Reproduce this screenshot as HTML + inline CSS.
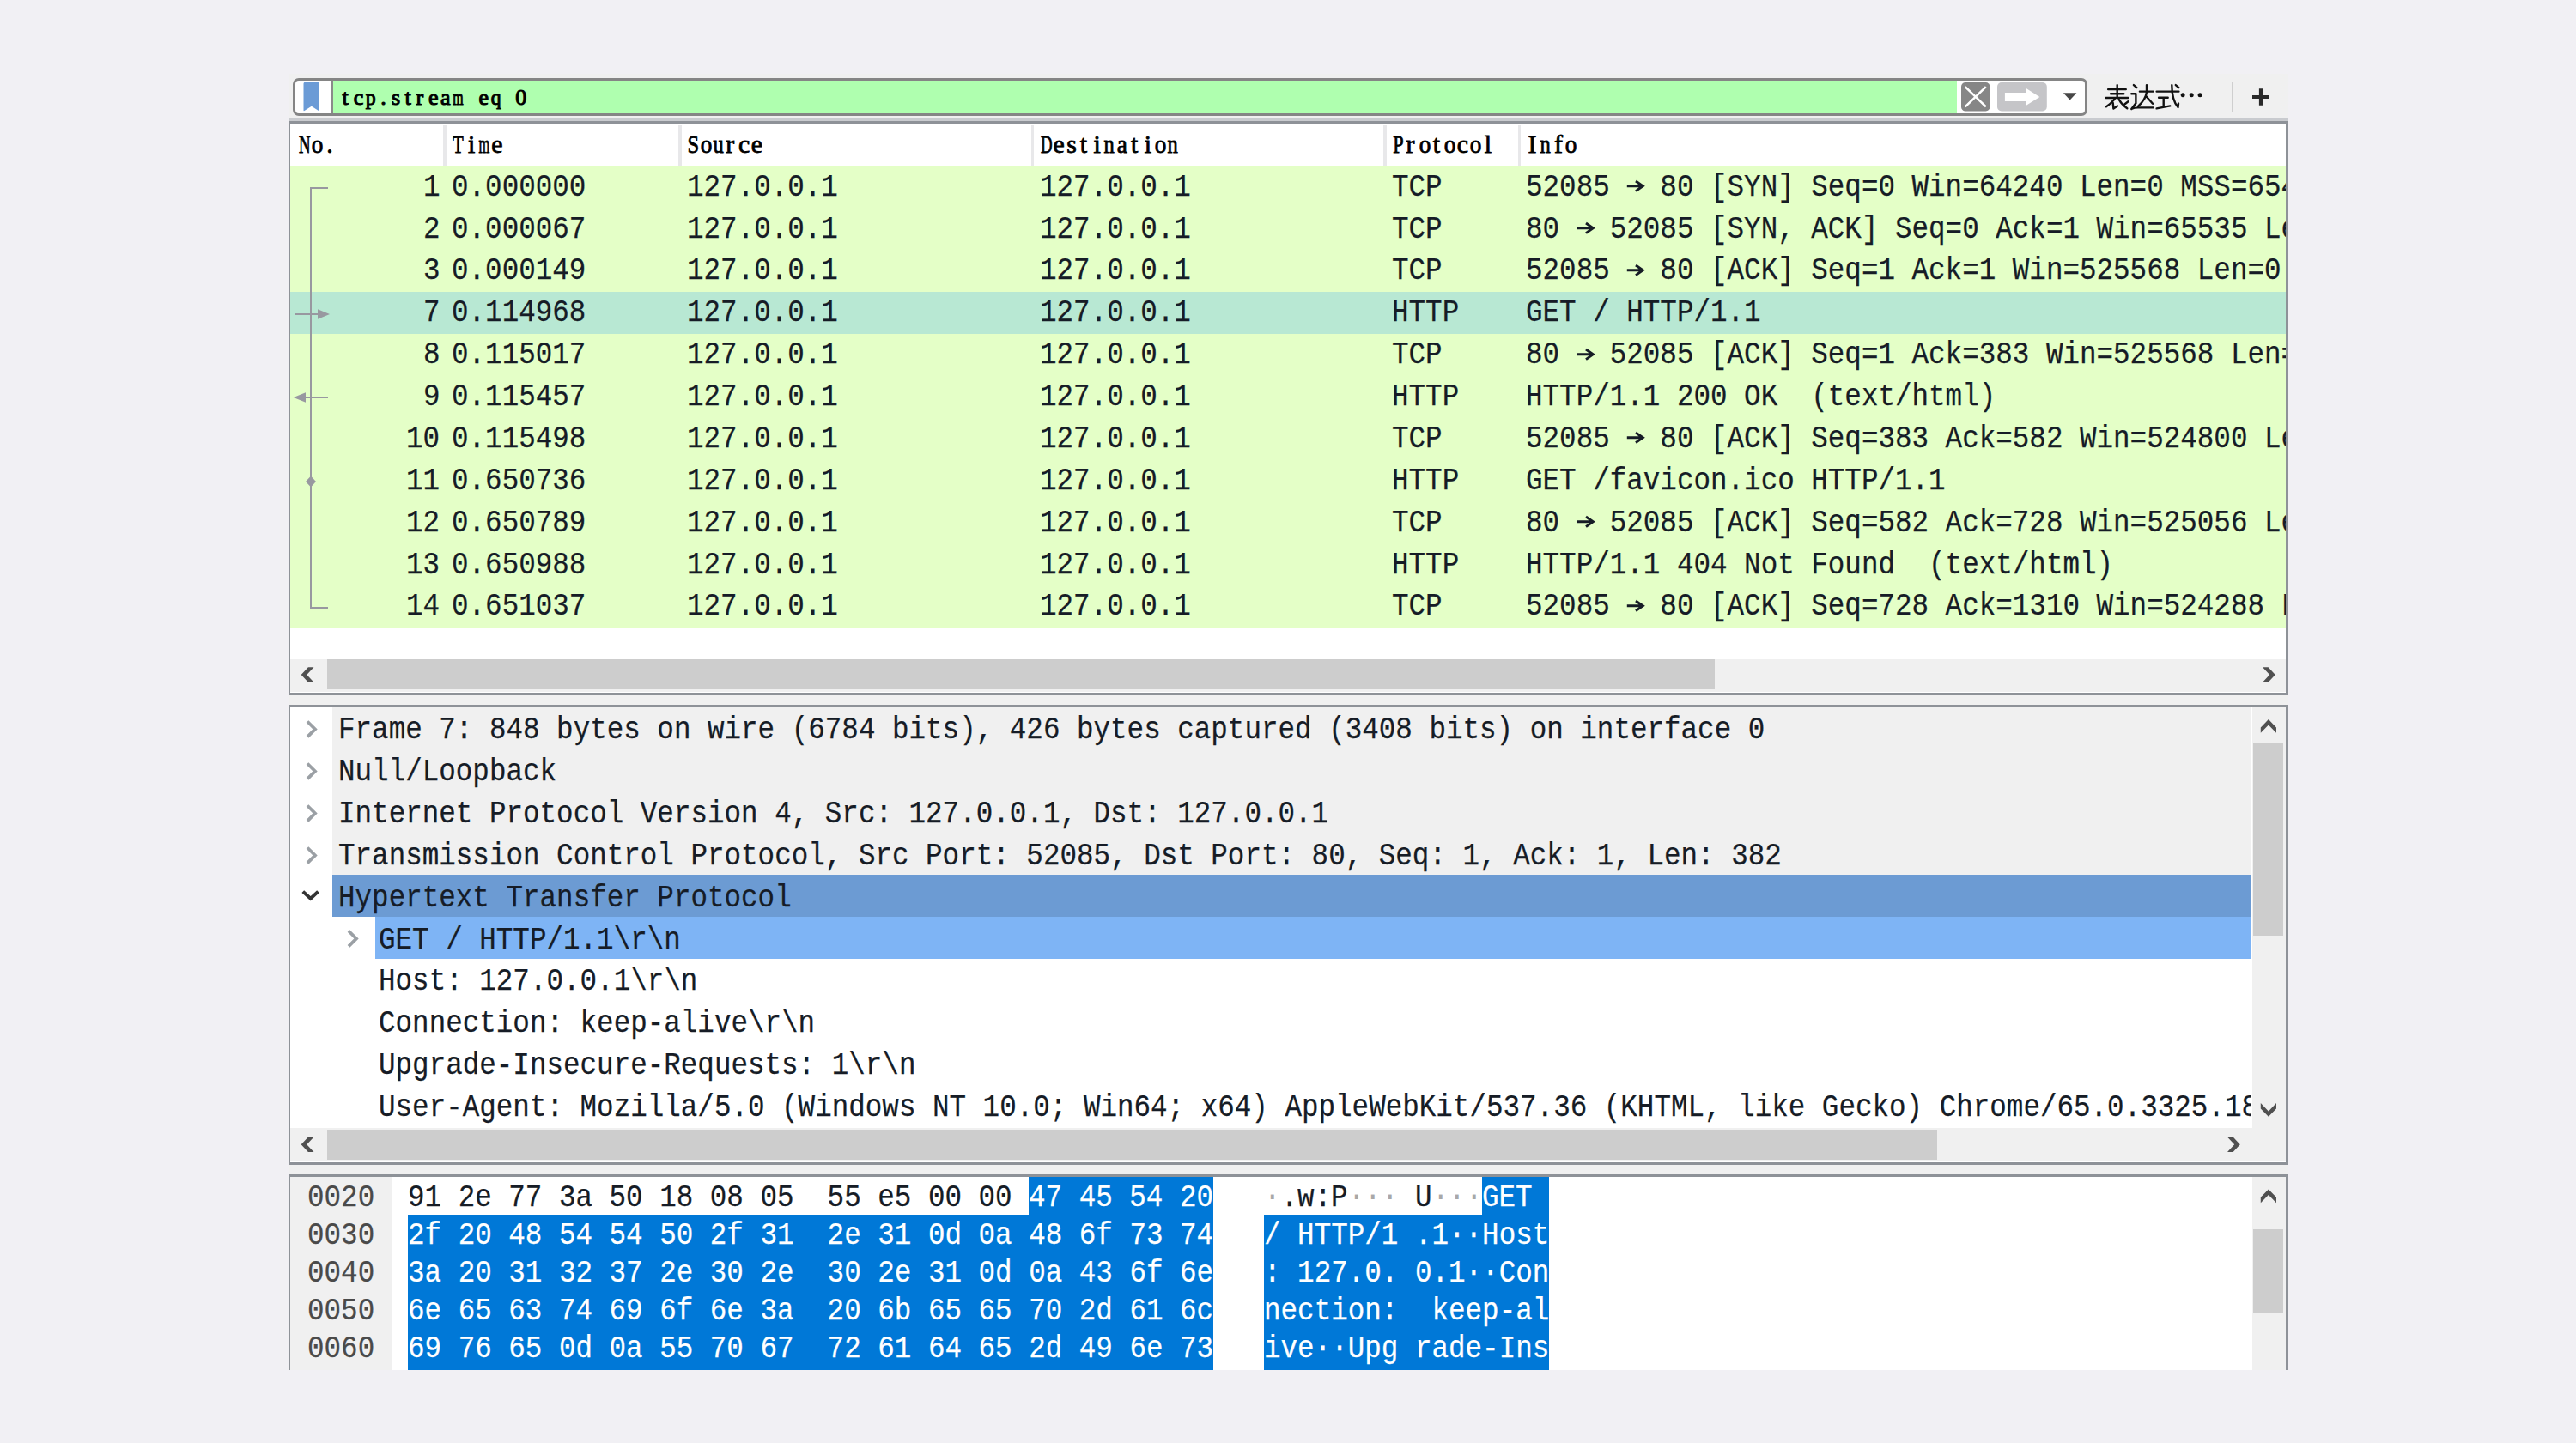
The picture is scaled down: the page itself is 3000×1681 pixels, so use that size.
<!DOCTYPE html>
<html><head><meta charset="utf-8"><style>
html,body{margin:0;padding:0;}
body{width:3000px;height:1681px;overflow:hidden;background:#f1f0f4;position:relative;font-family:"Liberation Mono",monospace;}
body div{position:absolute;}
.t{white-space:pre;}
</style></head><body>
<div style="left:336.00px;top:86.00px;width:2329.00px;height:1510.00px;background:#f0f0f0;"></div>
<div style="left:340.5px;top:90.5px;width:2090px;height:44px;box-sizing:border-box;border:3px solid #858585;border-radius:7px;background:#fff"></div>
<div style="left:387.50px;top:93.50px;width:1891.10px;height:38.00px;background:#afffaf;"></div>
<div style="left:385.00px;top:93.50px;width:2.80px;height:38.00px;background:#8a8a8a;"></div>
<svg style="position:absolute;left:352px;top:95px" width="22" height="36" viewBox="0 0 22 36"><path d="M1.5 2.5 Q1.5 0.8 3.2 0.8 L18.2 0.8 Q20 0.8 20 2.5 L20 33.5 Q20 34.5 19 34 L10.8 28.8 L2.5 34 Q1.5 34.5 1.5 33.5 Z" fill="#6b9bd6"/></svg>
<div class="t" style="left:398.56px;top:87.83px;line-height:52.00px;font-size:26.0px;font-family:'Liberation Serif';font-weight:normal;color:#000;transform:scale(1.000,1.0);transform-origin:4.33px 34.77px;-webkit-text-stroke:1.1px #000">t</div>
<div class="t" style="left:411.68px;top:87.83px;line-height:52.00px;font-size:26.0px;font-family:'Liberation Serif';font-weight:normal;color:#000;transform:scale(1.000,1.0);transform-origin:5.77px 34.77px;-webkit-text-stroke:1.1px #000">c</div>
<div class="t" style="left:424.80px;top:87.83px;line-height:52.00px;font-size:26.0px;font-family:'Liberation Serif';font-weight:normal;color:#000;transform:scale(0.913,1.0);transform-origin:7.23px 34.77px;-webkit-text-stroke:1.1px #000">p</div>
<div class="t" style="left:443.35px;top:87.83px;line-height:52.00px;font-size:26.0px;font-family:'Liberation Serif';font-weight:normal;color:#000;transform:scale(1.000,1.0);transform-origin:3.25px 34.77px;-webkit-text-stroke:1.1px #000">.</div>
<div class="t" style="left:456.11px;top:87.83px;line-height:52.00px;font-size:26.0px;font-family:'Liberation Serif';font-weight:normal;color:#000;transform:scale(1.000,1.0);transform-origin:5.06px 34.77px;-webkit-text-stroke:1.1px #000">s</div>
<div class="t" style="left:471.41px;top:87.83px;line-height:52.00px;font-size:26.0px;font-family:'Liberation Serif';font-weight:normal;color:#000;transform:scale(1.000,1.0);transform-origin:4.33px 34.77px;-webkit-text-stroke:1.1px #000">t</div>
<div class="t" style="left:484.53px;top:87.83px;line-height:52.00px;font-size:26.0px;font-family:'Liberation Serif';font-weight:normal;color:#000;transform:scale(1.000,1.0);transform-origin:5.77px 34.77px;-webkit-text-stroke:1.1px #000">r</div>
<div class="t" style="left:499.10px;top:87.83px;line-height:52.00px;font-size:26.0px;font-family:'Liberation Serif';font-weight:normal;color:#000;transform:scale(1.000,1.0);transform-origin:5.77px 34.77px;-webkit-text-stroke:1.1px #000">e</div>
<div class="t" style="left:512.95px;top:87.83px;line-height:52.00px;font-size:26.0px;font-family:'Liberation Serif';font-weight:normal;color:#000;transform:scale(1.000,1.0);transform-origin:6.50px 34.77px;-webkit-text-stroke:1.1px #000">a</div>
<div class="t" style="left:523.19px;top:87.83px;line-height:52.00px;font-size:26.0px;font-family:'Liberation Serif';font-weight:normal;color:#000;transform:scale(0.609,1.0);transform-origin:10.83px 34.77px;-webkit-text-stroke:1.1px #000">m</div>
<div class="t" style="left:557.38px;top:87.83px;line-height:52.00px;font-size:26.0px;font-family:'Liberation Serif';font-weight:normal;color:#000;transform:scale(1.000,1.0);transform-origin:5.77px 34.77px;-webkit-text-stroke:1.1px #000">e</div>
<div class="t" style="left:570.50px;top:87.83px;line-height:52.00px;font-size:26.0px;font-family:'Liberation Serif';font-weight:normal;color:#000;transform:scale(0.913,1.0);transform-origin:7.23px 34.77px;-webkit-text-stroke:1.1px #000">q</div>
<div class="t" style="left:600.37px;top:87.83px;line-height:52.00px;font-size:26.0px;font-family:'Liberation Serif';font-weight:normal;color:#000;transform:scale(1.000,1.0);transform-origin:6.50px 34.77px;-webkit-text-stroke:1.1px #000">0</div>
<svg style="position:absolute;left:2284px;top:95.9px" width="34" height="34" viewBox="0 0 34 34"><rect x="0" y="0" width="33.5" height="33.4" rx="5" fill="#868686"/><path d="M4.7 5.1 L28.8 28.4 M28.8 5.1 L4.7 28.4" stroke="#fff" stroke-width="2.6"/></svg>
<svg style="position:absolute;left:2325.6px;top:95.9px" width="58" height="34" viewBox="0 0 58 34"><rect x="0" y="0" width="57.8" height="33.4" rx="5" fill="#c5c5c8"/><path d="M8.9 12.1 L33.8 12.1 L33.8 7.1 L49.4 16.9 L33.8 26.8 L33.8 22.1 L8.9 22.1 Z" fill="#fff"/></svg>
<svg style="position:absolute;left:2400px;top:105px" width="22" height="14" viewBox="0 0 22 14"><path d="M2.9 3.3 L18.4 3.3 L10.65 11.5 Z" fill="#474747"/></svg>
<svg style="position:absolute;left:2445px;top:92px" width="130" height="40" viewBox="0 0 130 40"><g stroke="#111" stroke-width="2.4" fill="none" stroke-linecap="round" stroke-linejoin="round">
<path d="M10.1 12.1 H30.8 M13.1 17.2 H28.3 M7.6 22 H33.3 M20.7 7.1 V22 M17.7 23.5 Q13 29 8 32.3 M15.7 28 L16.4 34.5 L21 31.5 M22.7 24 Q26 30 32.3 34.3 M33.5 26.2 L28.3 30.3"/>
<path d="M39.9 7.1 L43.4 10.1 M37.3 17.2 H42.4 V28.3 L37.3 35 M37.3 34.8 Q41 33.2 46 33.4 H62.6 M46.9 14.6 H62.6 M55 7.1 V15.1 Q54 24 44.9 31.8 M53.8 19.5 L62 28.8"/>
<path d="M66.6 14.6 H92.4 M69.1 21.7 H79.7 M74.7 21.7 V31.8 M66.6 34.4 L82.3 31.4 M84.3 7.1 Q84.3 25 91.5 33 L92 28.5 M88.8 7.1 L92.4 10.1"/>
</g><circle cx="97.1" cy="18.7" r="2.5" fill="#111"/><circle cx="107.2" cy="18.7" r="2.5" fill="#111"/><circle cx="117.1" cy="18.7" r="2.5" fill="#111"/></svg>
<div style="left:2598.80px;top:96.00px;width:1.60px;height:33.50px;background:#cfcfcf;"></div>
<svg style="position:absolute;left:2620px;top:100px" width="26" height="26" viewBox="0 0 26 26"><path d="M13 3.3 V22.7 M3 13 H23" stroke="#2a2a2a" stroke-width="4.2"/></svg>
<div style="left:336.00px;top:138.00px;width:2329.00px;height:3.00px;background:#c9cbcf;"></div>
<div style="left:336px;top:140.5px;width:2329px;height:669px;box-sizing:border-box;border-style:solid;border-color:#8e9298;border-width:4.3px 3px 3px 2px;background:#fff"></div>
<div style="left:516.20px;top:146.00px;width:3.40px;height:47.00px;background:#e8e8ea;"></div>
<div style="left:790.20px;top:146.00px;width:3.40px;height:47.00px;background:#e8e8ea;"></div>
<div style="left:1200.70px;top:146.00px;width:3.40px;height:47.00px;background:#e8e8ea;"></div>
<div style="left:1611.40px;top:146.00px;width:3.40px;height:47.00px;background:#e8e8ea;"></div>
<div style="left:1767.50px;top:146.00px;width:3.40px;height:47.00px;background:#e8e8ea;"></div>
<div class="t" style="left:343.64px;top:137.75px;line-height:59.60px;font-size:29.8px;font-family:'Liberation Serif';font-weight:normal;color:#000;transform:scale(0.632,1.0);transform-origin:10.76px 39.85px;-webkit-text-stroke:0.85px #000">N</div>
<div class="t" style="left:361.75px;top:137.75px;line-height:59.60px;font-size:29.8px;font-family:'Liberation Serif';font-weight:normal;color:#000;transform:scale(0.913,1.0);transform-origin:7.45px 39.85px;-webkit-text-stroke:0.85px #000">o</div>
<div class="t" style="left:380.27px;top:137.75px;line-height:59.60px;font-size:29.8px;font-family:'Liberation Serif';font-weight:normal;color:#000;transform:scale(1.000,1.0);transform-origin:3.73px 39.85px;-webkit-text-stroke:0.85px #000">.</div>
<div class="t" style="left:524.46px;top:137.75px;line-height:59.60px;font-size:29.8px;font-family:'Liberation Serif';font-weight:normal;color:#000;transform:scale(0.684,1.0);transform-origin:9.94px 39.85px;-webkit-text-stroke:0.85px #000">T</div>
<div class="t" style="left:545.06px;top:137.75px;line-height:59.60px;font-size:29.8px;font-family:'Liberation Serif';font-weight:normal;color:#000;transform:scale(1.000,1.0);transform-origin:4.14px 39.85px;-webkit-text-stroke:0.85px #000">i</div>
<div class="t" style="left:551.59px;top:137.75px;line-height:59.60px;font-size:29.8px;font-family:'Liberation Serif';font-weight:normal;color:#000;transform:scale(0.548,1.0);transform-origin:12.41px 39.85px;-webkit-text-stroke:0.85px #000">m</div>
<div class="t" style="left:572.19px;top:137.75px;line-height:59.60px;font-size:29.8px;font-family:'Liberation Serif';font-weight:normal;color:#000;transform:scale(1.000,1.0);transform-origin:6.61px 39.85px;-webkit-text-stroke:0.85px #000">e</div>
<div class="t" style="left:799.11px;top:137.75px;line-height:59.60px;font-size:29.8px;font-family:'Liberation Serif';font-weight:normal;color:#000;transform:scale(0.821,1.0);transform-origin:8.29px 39.85px;-webkit-text-stroke:0.85px #000">S</div>
<div class="t" style="left:814.75px;top:137.75px;line-height:59.60px;font-size:29.8px;font-family:'Liberation Serif';font-weight:normal;color:#000;transform:scale(0.913,1.0);transform-origin:7.45px 39.85px;-webkit-text-stroke:0.85px #000">o</div>
<div class="t" style="left:828.71px;top:137.75px;line-height:59.60px;font-size:29.8px;font-family:'Liberation Serif';font-weight:normal;color:#000;transform:scale(0.821,1.0);transform-origin:8.29px 39.85px;-webkit-text-stroke:0.85px #000">u</div>
<div class="t" style="left:845.19px;top:137.75px;line-height:59.60px;font-size:29.8px;font-family:'Liberation Serif';font-weight:normal;color:#000;transform:scale(1.000,1.0);transform-origin:6.61px 39.85px;-webkit-text-stroke:0.85px #000">r</div>
<div class="t" style="left:859.99px;top:137.75px;line-height:59.60px;font-size:29.8px;font-family:'Liberation Serif';font-weight:normal;color:#000;transform:scale(1.000,1.0);transform-origin:6.61px 39.85px;-webkit-text-stroke:0.85px #000">c</div>
<div class="t" style="left:874.79px;top:137.75px;line-height:59.60px;font-size:29.8px;font-family:'Liberation Serif';font-weight:normal;color:#000;transform:scale(1.000,1.0);transform-origin:6.61px 39.85px;-webkit-text-stroke:0.85px #000">e</div>
<div class="t" style="left:1207.64px;top:137.75px;line-height:59.60px;font-size:29.8px;font-family:'Liberation Serif';font-weight:normal;color:#000;transform:scale(0.632,1.0);transform-origin:10.76px 39.85px;-webkit-text-stroke:0.85px #000">D</div>
<div class="t" style="left:1226.59px;top:137.75px;line-height:59.60px;font-size:29.8px;font-family:'Liberation Serif';font-weight:normal;color:#000;transform:scale(1.000,1.0);transform-origin:6.61px 39.85px;-webkit-text-stroke:0.85px #000">e</div>
<div class="t" style="left:1242.20px;top:137.75px;line-height:59.60px;font-size:29.8px;font-family:'Liberation Serif';font-weight:normal;color:#000;transform:scale(1.000,1.0);transform-origin:5.80px 39.85px;-webkit-text-stroke:0.85px #000">s</div>
<div class="t" style="left:1257.84px;top:137.75px;line-height:59.60px;font-size:29.8px;font-family:'Liberation Serif';font-weight:normal;color:#000;transform:scale(1.000,1.0);transform-origin:4.96px 39.85px;-webkit-text-stroke:0.85px #000">t</div>
<div class="t" style="left:1273.46px;top:137.75px;line-height:59.60px;font-size:29.8px;font-family:'Liberation Serif';font-weight:normal;color:#000;transform:scale(1.000,1.0);transform-origin:4.14px 39.85px;-webkit-text-stroke:0.85px #000">i</div>
<div class="t" style="left:1284.11px;top:137.75px;line-height:59.60px;font-size:29.8px;font-family:'Liberation Serif';font-weight:normal;color:#000;transform:scale(0.821,1.0);transform-origin:8.29px 39.85px;-webkit-text-stroke:0.85px #000">n</div>
<div class="t" style="left:1299.75px;top:137.75px;line-height:59.60px;font-size:29.8px;font-family:'Liberation Serif';font-weight:normal;color:#000;transform:scale(0.913,1.0);transform-origin:7.45px 39.85px;-webkit-text-stroke:0.85px #000">a</div>
<div class="t" style="left:1317.04px;top:137.75px;line-height:59.60px;font-size:29.8px;font-family:'Liberation Serif';font-weight:normal;color:#000;transform:scale(1.000,1.0);transform-origin:4.96px 39.85px;-webkit-text-stroke:0.85px #000">t</div>
<div class="t" style="left:1332.66px;top:137.75px;line-height:59.60px;font-size:29.8px;font-family:'Liberation Serif';font-weight:normal;color:#000;transform:scale(1.000,1.0);transform-origin:4.14px 39.85px;-webkit-text-stroke:0.85px #000">i</div>
<div class="t" style="left:1344.15px;top:137.75px;line-height:59.60px;font-size:29.8px;font-family:'Liberation Serif';font-weight:normal;color:#000;transform:scale(0.913,1.0);transform-origin:7.45px 39.85px;-webkit-text-stroke:0.85px #000">o</div>
<div class="t" style="left:1358.11px;top:137.75px;line-height:59.60px;font-size:29.8px;font-family:'Liberation Serif';font-weight:normal;color:#000;transform:scale(0.821,1.0);transform-origin:8.29px 39.85px;-webkit-text-stroke:0.85px #000">n</div>
<div class="t" style="left:1620.30px;top:137.75px;line-height:59.60px;font-size:29.8px;font-family:'Liberation Serif';font-weight:normal;color:#000;transform:scale(0.747,1.0);transform-origin:9.10px 39.85px;-webkit-text-stroke:0.85px #000">P</div>
<div class="t" style="left:1637.59px;top:137.75px;line-height:59.60px;font-size:29.8px;font-family:'Liberation Serif';font-weight:normal;color:#000;transform:scale(1.000,1.0);transform-origin:6.61px 39.85px;-webkit-text-stroke:0.85px #000">r</div>
<div class="t" style="left:1651.55px;top:137.75px;line-height:59.60px;font-size:29.8px;font-family:'Liberation Serif';font-weight:normal;color:#000;transform:scale(0.913,1.0);transform-origin:7.45px 39.85px;-webkit-text-stroke:0.85px #000">o</div>
<div class="t" style="left:1668.84px;top:137.75px;line-height:59.60px;font-size:29.8px;font-family:'Liberation Serif';font-weight:normal;color:#000;transform:scale(1.000,1.0);transform-origin:4.96px 39.85px;-webkit-text-stroke:0.85px #000">t</div>
<div class="t" style="left:1681.15px;top:137.75px;line-height:59.60px;font-size:29.8px;font-family:'Liberation Serif';font-weight:normal;color:#000;transform:scale(0.913,1.0);transform-origin:7.45px 39.85px;-webkit-text-stroke:0.85px #000">o</div>
<div class="t" style="left:1696.79px;top:137.75px;line-height:59.60px;font-size:29.8px;font-family:'Liberation Serif';font-weight:normal;color:#000;transform:scale(1.000,1.0);transform-origin:6.61px 39.85px;-webkit-text-stroke:0.85px #000">c</div>
<div class="t" style="left:1710.75px;top:137.75px;line-height:59.60px;font-size:29.8px;font-family:'Liberation Serif';font-weight:normal;color:#000;transform:scale(0.913,1.0);transform-origin:7.45px 39.85px;-webkit-text-stroke:0.85px #000">o</div>
<div class="t" style="left:1728.86px;top:137.75px;line-height:59.60px;font-size:29.8px;font-family:'Liberation Serif';font-weight:normal;color:#000;transform:scale(1.000,1.0);transform-origin:4.14px 39.85px;-webkit-text-stroke:0.85px #000">l</div>
<div class="t" style="left:1779.60px;top:137.75px;line-height:59.60px;font-size:29.8px;font-family:'Liberation Serif';font-weight:normal;color:#000;transform:scale(1.000,1.0);transform-origin:5.80px 39.85px;-webkit-text-stroke:0.85px #000">I</div>
<div class="t" style="left:1791.91px;top:137.75px;line-height:59.60px;font-size:29.8px;font-family:'Liberation Serif';font-weight:normal;color:#000;transform:scale(0.821,1.0);transform-origin:8.29px 39.85px;-webkit-text-stroke:0.85px #000">n</div>
<div class="t" style="left:1810.04px;top:137.75px;line-height:59.60px;font-size:29.8px;font-family:'Liberation Serif';font-weight:normal;color:#000;transform:scale(1.000,1.0);transform-origin:4.96px 39.85px;-webkit-text-stroke:0.85px #000">f</div>
<div class="t" style="left:1822.35px;top:137.75px;line-height:59.60px;font-size:29.8px;font-family:'Liberation Serif';font-weight:normal;color:#000;transform:scale(0.913,1.0);transform-origin:7.45px 39.85px;-webkit-text-stroke:0.85px #000">o</div>
<div style="left:338.00px;top:193.00px;width:2324.00px;height:49.18px;background:#e4ffc7;"></div>
<div style="left:338.00px;top:241.88px;width:2324.00px;height:49.18px;background:#e4ffc7;"></div>
<div style="left:338.00px;top:290.76px;width:2324.00px;height:49.18px;background:#e4ffc7;"></div>
<div style="left:338.00px;top:339.64px;width:2324.00px;height:49.18px;background:#b8e8d3;"></div>
<div style="left:338.00px;top:388.52px;width:2324.00px;height:49.18px;background:#e4ffc7;"></div>
<div style="left:338.00px;top:437.40px;width:2324.00px;height:49.18px;background:#e4ffc7;"></div>
<div style="left:338.00px;top:486.28px;width:2324.00px;height:49.18px;background:#e4ffc7;"></div>
<div style="left:338.00px;top:535.16px;width:2324.00px;height:49.18px;background:#e4ffc7;"></div>
<div style="left:338.00px;top:584.04px;width:2324.00px;height:49.18px;background:#e4ffc7;"></div>
<div style="left:338.00px;top:632.92px;width:2324.00px;height:49.18px;background:#e4ffc7;"></div>
<div style="left:338.00px;top:681.80px;width:2324.00px;height:49.18px;background:#e4ffc7;"></div>
<div style="left:338px;top:193px;width:2324px;height:574px;overflow:hidden">
<div class="t" style="left:154.95px;top:-10.38px;line-height:72.00px;font-size:36.0px;color:#161c26;font-weight:normal;transform:scale(0.9047,1.0000);transform-origin:0 45.58px;-webkit-text-stroke:0.25px #161c26">1</div>
<div class="t" style="left:187.50px;top:-10.38px;line-height:72.00px;font-size:36.0px;color:#161c26;font-weight:normal;transform:scale(0.9047,1.0000);transform-origin:0 45.58px;-webkit-text-stroke:0.25px #161c26">0.000000</div>
<div class="t" style="left:461.50px;top:-10.38px;line-height:72.00px;font-size:36.0px;color:#161c26;font-weight:normal;transform:scale(0.9047,1.0000);transform-origin:0 45.58px;-webkit-text-stroke:0.25px #161c26">127.0.0.1</div>
<div class="t" style="left:872.50px;top:-10.38px;line-height:72.00px;font-size:36.0px;color:#161c26;font-weight:normal;transform:scale(0.9047,1.0000);transform-origin:0 45.58px;-webkit-text-stroke:0.25px #161c26">127.0.0.1</div>
<div class="t" style="left:1283.00px;top:-10.38px;line-height:72.00px;font-size:36.0px;color:#161c26;font-weight:normal;transform:scale(0.9047,1.0000);transform-origin:0 45.58px;-webkit-text-stroke:0.25px #161c26">TCP</div>
<div class="t" style="left:1439.00px;top:-10.38px;line-height:72.00px;font-size:36.0px;color:#161c26;font-weight:normal;transform:scale(0.9047,1.0000);transform-origin:0 45.58px;-webkit-text-stroke:0.25px #161c26">52085   80 [SYN] Seq=0 Win=64240 Len=0 MSS=65495 WS=256 SACK_PERM=1</div>
<svg style="position:absolute;left:1556.27px;top:0.00px" width="22" height="48" viewBox="0 0 22 48"><path d="M0.8 23.8 H19 M11 18 L19.3 23.8 L11 29.6" stroke="#161c26" stroke-width="2.9" fill="none"/></svg>
<div class="t" style="left:154.95px;top:38.50px;line-height:72.00px;font-size:36.0px;color:#161c26;font-weight:normal;transform:scale(0.9047,1.0000);transform-origin:0 45.58px;-webkit-text-stroke:0.25px #161c26">2</div>
<div class="t" style="left:187.50px;top:38.50px;line-height:72.00px;font-size:36.0px;color:#161c26;font-weight:normal;transform:scale(0.9047,1.0000);transform-origin:0 45.58px;-webkit-text-stroke:0.25px #161c26">0.000067</div>
<div class="t" style="left:461.50px;top:38.50px;line-height:72.00px;font-size:36.0px;color:#161c26;font-weight:normal;transform:scale(0.9047,1.0000);transform-origin:0 45.58px;-webkit-text-stroke:0.25px #161c26">127.0.0.1</div>
<div class="t" style="left:872.50px;top:38.50px;line-height:72.00px;font-size:36.0px;color:#161c26;font-weight:normal;transform:scale(0.9047,1.0000);transform-origin:0 45.58px;-webkit-text-stroke:0.25px #161c26">127.0.0.1</div>
<div class="t" style="left:1283.00px;top:38.50px;line-height:72.00px;font-size:36.0px;color:#161c26;font-weight:normal;transform:scale(0.9047,1.0000);transform-origin:0 45.58px;-webkit-text-stroke:0.25px #161c26">TCP</div>
<div class="t" style="left:1439.00px;top:38.50px;line-height:72.00px;font-size:36.0px;color:#161c26;font-weight:normal;transform:scale(0.9047,1.0000);transform-origin:0 45.58px;-webkit-text-stroke:0.25px #161c26">80   52085 [SYN, ACK] Seq=0 Ack=1 Win=65535 Len=0 MSS=65495 WS=256 SACK_PERM=1</div>
<svg style="position:absolute;left:1497.63px;top:48.88px" width="22" height="48" viewBox="0 0 22 48"><path d="M0.8 23.8 H19 M11 18 L19.3 23.8 L11 29.6" stroke="#161c26" stroke-width="2.9" fill="none"/></svg>
<div class="t" style="left:154.95px;top:87.38px;line-height:72.00px;font-size:36.0px;color:#161c26;font-weight:normal;transform:scale(0.9047,1.0000);transform-origin:0 45.58px;-webkit-text-stroke:0.25px #161c26">3</div>
<div class="t" style="left:187.50px;top:87.38px;line-height:72.00px;font-size:36.0px;color:#161c26;font-weight:normal;transform:scale(0.9047,1.0000);transform-origin:0 45.58px;-webkit-text-stroke:0.25px #161c26">0.000149</div>
<div class="t" style="left:461.50px;top:87.38px;line-height:72.00px;font-size:36.0px;color:#161c26;font-weight:normal;transform:scale(0.9047,1.0000);transform-origin:0 45.58px;-webkit-text-stroke:0.25px #161c26">127.0.0.1</div>
<div class="t" style="left:872.50px;top:87.38px;line-height:72.00px;font-size:36.0px;color:#161c26;font-weight:normal;transform:scale(0.9047,1.0000);transform-origin:0 45.58px;-webkit-text-stroke:0.25px #161c26">127.0.0.1</div>
<div class="t" style="left:1283.00px;top:87.38px;line-height:72.00px;font-size:36.0px;color:#161c26;font-weight:normal;transform:scale(0.9047,1.0000);transform-origin:0 45.58px;-webkit-text-stroke:0.25px #161c26">TCP</div>
<div class="t" style="left:1439.00px;top:87.38px;line-height:72.00px;font-size:36.0px;color:#161c26;font-weight:normal;transform:scale(0.9047,1.0000);transform-origin:0 45.58px;-webkit-text-stroke:0.25px #161c26">52085   80 [ACK] Seq=1 Ack=1 Win=525568 Len=0</div>
<svg style="position:absolute;left:1556.27px;top:97.76px" width="22" height="48" viewBox="0 0 22 48"><path d="M0.8 23.8 H19 M11 18 L19.3 23.8 L11 29.6" stroke="#161c26" stroke-width="2.9" fill="none"/></svg>
<div class="t" style="left:154.95px;top:136.26px;line-height:72.00px;font-size:36.0px;color:#161c26;font-weight:normal;transform:scale(0.9047,1.0000);transform-origin:0 45.58px;-webkit-text-stroke:0.25px #161c26">7</div>
<div class="t" style="left:187.50px;top:136.26px;line-height:72.00px;font-size:36.0px;color:#161c26;font-weight:normal;transform:scale(0.9047,1.0000);transform-origin:0 45.58px;-webkit-text-stroke:0.25px #161c26">0.114968</div>
<div class="t" style="left:461.50px;top:136.26px;line-height:72.00px;font-size:36.0px;color:#161c26;font-weight:normal;transform:scale(0.9047,1.0000);transform-origin:0 45.58px;-webkit-text-stroke:0.25px #161c26">127.0.0.1</div>
<div class="t" style="left:872.50px;top:136.26px;line-height:72.00px;font-size:36.0px;color:#161c26;font-weight:normal;transform:scale(0.9047,1.0000);transform-origin:0 45.58px;-webkit-text-stroke:0.25px #161c26">127.0.0.1</div>
<div class="t" style="left:1283.00px;top:136.26px;line-height:72.00px;font-size:36.0px;color:#161c26;font-weight:normal;transform:scale(0.9047,1.0000);transform-origin:0 45.58px;-webkit-text-stroke:0.25px #161c26">HTTP</div>
<div class="t" style="left:1439.00px;top:136.26px;line-height:72.00px;font-size:36.0px;color:#161c26;font-weight:normal;transform:scale(0.9047,1.0000);transform-origin:0 45.58px;-webkit-text-stroke:0.25px #161c26">GET / HTTP/1.1</div>
<div class="t" style="left:154.95px;top:185.14px;line-height:72.00px;font-size:36.0px;color:#161c26;font-weight:normal;transform:scale(0.9047,1.0000);transform-origin:0 45.58px;-webkit-text-stroke:0.25px #161c26">8</div>
<div class="t" style="left:187.50px;top:185.14px;line-height:72.00px;font-size:36.0px;color:#161c26;font-weight:normal;transform:scale(0.9047,1.0000);transform-origin:0 45.58px;-webkit-text-stroke:0.25px #161c26">0.115017</div>
<div class="t" style="left:461.50px;top:185.14px;line-height:72.00px;font-size:36.0px;color:#161c26;font-weight:normal;transform:scale(0.9047,1.0000);transform-origin:0 45.58px;-webkit-text-stroke:0.25px #161c26">127.0.0.1</div>
<div class="t" style="left:872.50px;top:185.14px;line-height:72.00px;font-size:36.0px;color:#161c26;font-weight:normal;transform:scale(0.9047,1.0000);transform-origin:0 45.58px;-webkit-text-stroke:0.25px #161c26">127.0.0.1</div>
<div class="t" style="left:1283.00px;top:185.14px;line-height:72.00px;font-size:36.0px;color:#161c26;font-weight:normal;transform:scale(0.9047,1.0000);transform-origin:0 45.58px;-webkit-text-stroke:0.25px #161c26">TCP</div>
<div class="t" style="left:1439.00px;top:185.14px;line-height:72.00px;font-size:36.0px;color:#161c26;font-weight:normal;transform:scale(0.9047,1.0000);transform-origin:0 45.58px;-webkit-text-stroke:0.25px #161c26">80   52085 [ACK] Seq=1 Ack=383 Win=525568 Len=0</div>
<svg style="position:absolute;left:1497.63px;top:195.52px" width="22" height="48" viewBox="0 0 22 48"><path d="M0.8 23.8 H19 M11 18 L19.3 23.8 L11 29.6" stroke="#161c26" stroke-width="2.9" fill="none"/></svg>
<div class="t" style="left:154.95px;top:234.02px;line-height:72.00px;font-size:36.0px;color:#161c26;font-weight:normal;transform:scale(0.9047,1.0000);transform-origin:0 45.58px;-webkit-text-stroke:0.25px #161c26">9</div>
<div class="t" style="left:187.50px;top:234.02px;line-height:72.00px;font-size:36.0px;color:#161c26;font-weight:normal;transform:scale(0.9047,1.0000);transform-origin:0 45.58px;-webkit-text-stroke:0.25px #161c26">0.115457</div>
<div class="t" style="left:461.50px;top:234.02px;line-height:72.00px;font-size:36.0px;color:#161c26;font-weight:normal;transform:scale(0.9047,1.0000);transform-origin:0 45.58px;-webkit-text-stroke:0.25px #161c26">127.0.0.1</div>
<div class="t" style="left:872.50px;top:234.02px;line-height:72.00px;font-size:36.0px;color:#161c26;font-weight:normal;transform:scale(0.9047,1.0000);transform-origin:0 45.58px;-webkit-text-stroke:0.25px #161c26">127.0.0.1</div>
<div class="t" style="left:1283.00px;top:234.02px;line-height:72.00px;font-size:36.0px;color:#161c26;font-weight:normal;transform:scale(0.9047,1.0000);transform-origin:0 45.58px;-webkit-text-stroke:0.25px #161c26">HTTP</div>
<div class="t" style="left:1439.00px;top:234.02px;line-height:72.00px;font-size:36.0px;color:#161c26;font-weight:normal;transform:scale(0.9047,1.0000);transform-origin:0 45.58px;-webkit-text-stroke:0.25px #161c26">HTTP/1.1 200 OK  (text/html)</div>
<div class="t" style="left:135.41px;top:282.90px;line-height:72.00px;font-size:36.0px;color:#161c26;font-weight:normal;transform:scale(0.9047,1.0000);transform-origin:0 45.58px;-webkit-text-stroke:0.25px #161c26">10</div>
<div class="t" style="left:187.50px;top:282.90px;line-height:72.00px;font-size:36.0px;color:#161c26;font-weight:normal;transform:scale(0.9047,1.0000);transform-origin:0 45.58px;-webkit-text-stroke:0.25px #161c26">0.115498</div>
<div class="t" style="left:461.50px;top:282.90px;line-height:72.00px;font-size:36.0px;color:#161c26;font-weight:normal;transform:scale(0.9047,1.0000);transform-origin:0 45.58px;-webkit-text-stroke:0.25px #161c26">127.0.0.1</div>
<div class="t" style="left:872.50px;top:282.90px;line-height:72.00px;font-size:36.0px;color:#161c26;font-weight:normal;transform:scale(0.9047,1.0000);transform-origin:0 45.58px;-webkit-text-stroke:0.25px #161c26">127.0.0.1</div>
<div class="t" style="left:1283.00px;top:282.90px;line-height:72.00px;font-size:36.0px;color:#161c26;font-weight:normal;transform:scale(0.9047,1.0000);transform-origin:0 45.58px;-webkit-text-stroke:0.25px #161c26">TCP</div>
<div class="t" style="left:1439.00px;top:282.90px;line-height:72.00px;font-size:36.0px;color:#161c26;font-weight:normal;transform:scale(0.9047,1.0000);transform-origin:0 45.58px;-webkit-text-stroke:0.25px #161c26">52085   80 [ACK] Seq=383 Ack=582 Win=524800 Len=0</div>
<svg style="position:absolute;left:1556.27px;top:293.28px" width="22" height="48" viewBox="0 0 22 48"><path d="M0.8 23.8 H19 M11 18 L19.3 23.8 L11 29.6" stroke="#161c26" stroke-width="2.9" fill="none"/></svg>
<div class="t" style="left:135.41px;top:331.78px;line-height:72.00px;font-size:36.0px;color:#161c26;font-weight:normal;transform:scale(0.9047,1.0000);transform-origin:0 45.58px;-webkit-text-stroke:0.25px #161c26">11</div>
<div class="t" style="left:187.50px;top:331.78px;line-height:72.00px;font-size:36.0px;color:#161c26;font-weight:normal;transform:scale(0.9047,1.0000);transform-origin:0 45.58px;-webkit-text-stroke:0.25px #161c26">0.650736</div>
<div class="t" style="left:461.50px;top:331.78px;line-height:72.00px;font-size:36.0px;color:#161c26;font-weight:normal;transform:scale(0.9047,1.0000);transform-origin:0 45.58px;-webkit-text-stroke:0.25px #161c26">127.0.0.1</div>
<div class="t" style="left:872.50px;top:331.78px;line-height:72.00px;font-size:36.0px;color:#161c26;font-weight:normal;transform:scale(0.9047,1.0000);transform-origin:0 45.58px;-webkit-text-stroke:0.25px #161c26">127.0.0.1</div>
<div class="t" style="left:1283.00px;top:331.78px;line-height:72.00px;font-size:36.0px;color:#161c26;font-weight:normal;transform:scale(0.9047,1.0000);transform-origin:0 45.58px;-webkit-text-stroke:0.25px #161c26">HTTP</div>
<div class="t" style="left:1439.00px;top:331.78px;line-height:72.00px;font-size:36.0px;color:#161c26;font-weight:normal;transform:scale(0.9047,1.0000);transform-origin:0 45.58px;-webkit-text-stroke:0.25px #161c26">GET /favicon.ico HTTP/1.1</div>
<div class="t" style="left:135.41px;top:380.66px;line-height:72.00px;font-size:36.0px;color:#161c26;font-weight:normal;transform:scale(0.9047,1.0000);transform-origin:0 45.58px;-webkit-text-stroke:0.25px #161c26">12</div>
<div class="t" style="left:187.50px;top:380.66px;line-height:72.00px;font-size:36.0px;color:#161c26;font-weight:normal;transform:scale(0.9047,1.0000);transform-origin:0 45.58px;-webkit-text-stroke:0.25px #161c26">0.650789</div>
<div class="t" style="left:461.50px;top:380.66px;line-height:72.00px;font-size:36.0px;color:#161c26;font-weight:normal;transform:scale(0.9047,1.0000);transform-origin:0 45.58px;-webkit-text-stroke:0.25px #161c26">127.0.0.1</div>
<div class="t" style="left:872.50px;top:380.66px;line-height:72.00px;font-size:36.0px;color:#161c26;font-weight:normal;transform:scale(0.9047,1.0000);transform-origin:0 45.58px;-webkit-text-stroke:0.25px #161c26">127.0.0.1</div>
<div class="t" style="left:1283.00px;top:380.66px;line-height:72.00px;font-size:36.0px;color:#161c26;font-weight:normal;transform:scale(0.9047,1.0000);transform-origin:0 45.58px;-webkit-text-stroke:0.25px #161c26">TCP</div>
<div class="t" style="left:1439.00px;top:380.66px;line-height:72.00px;font-size:36.0px;color:#161c26;font-weight:normal;transform:scale(0.9047,1.0000);transform-origin:0 45.58px;-webkit-text-stroke:0.25px #161c26">80   52085 [ACK] Seq=582 Ack=728 Win=525056 Len=0</div>
<svg style="position:absolute;left:1497.63px;top:391.04px" width="22" height="48" viewBox="0 0 22 48"><path d="M0.8 23.8 H19 M11 18 L19.3 23.8 L11 29.6" stroke="#161c26" stroke-width="2.9" fill="none"/></svg>
<div class="t" style="left:135.41px;top:429.54px;line-height:72.00px;font-size:36.0px;color:#161c26;font-weight:normal;transform:scale(0.9047,1.0000);transform-origin:0 45.58px;-webkit-text-stroke:0.25px #161c26">13</div>
<div class="t" style="left:187.50px;top:429.54px;line-height:72.00px;font-size:36.0px;color:#161c26;font-weight:normal;transform:scale(0.9047,1.0000);transform-origin:0 45.58px;-webkit-text-stroke:0.25px #161c26">0.650988</div>
<div class="t" style="left:461.50px;top:429.54px;line-height:72.00px;font-size:36.0px;color:#161c26;font-weight:normal;transform:scale(0.9047,1.0000);transform-origin:0 45.58px;-webkit-text-stroke:0.25px #161c26">127.0.0.1</div>
<div class="t" style="left:872.50px;top:429.54px;line-height:72.00px;font-size:36.0px;color:#161c26;font-weight:normal;transform:scale(0.9047,1.0000);transform-origin:0 45.58px;-webkit-text-stroke:0.25px #161c26">127.0.0.1</div>
<div class="t" style="left:1283.00px;top:429.54px;line-height:72.00px;font-size:36.0px;color:#161c26;font-weight:normal;transform:scale(0.9047,1.0000);transform-origin:0 45.58px;-webkit-text-stroke:0.25px #161c26">HTTP</div>
<div class="t" style="left:1439.00px;top:429.54px;line-height:72.00px;font-size:36.0px;color:#161c26;font-weight:normal;transform:scale(0.9047,1.0000);transform-origin:0 45.58px;-webkit-text-stroke:0.25px #161c26">HTTP/1.1 404 Not Found  (text/html)</div>
<div class="t" style="left:135.41px;top:478.42px;line-height:72.00px;font-size:36.0px;color:#161c26;font-weight:normal;transform:scale(0.9047,1.0000);transform-origin:0 45.58px;-webkit-text-stroke:0.25px #161c26">14</div>
<div class="t" style="left:187.50px;top:478.42px;line-height:72.00px;font-size:36.0px;color:#161c26;font-weight:normal;transform:scale(0.9047,1.0000);transform-origin:0 45.58px;-webkit-text-stroke:0.25px #161c26">0.651037</div>
<div class="t" style="left:461.50px;top:478.42px;line-height:72.00px;font-size:36.0px;color:#161c26;font-weight:normal;transform:scale(0.9047,1.0000);transform-origin:0 45.58px;-webkit-text-stroke:0.25px #161c26">127.0.0.1</div>
<div class="t" style="left:872.50px;top:478.42px;line-height:72.00px;font-size:36.0px;color:#161c26;font-weight:normal;transform:scale(0.9047,1.0000);transform-origin:0 45.58px;-webkit-text-stroke:0.25px #161c26">127.0.0.1</div>
<div class="t" style="left:1283.00px;top:478.42px;line-height:72.00px;font-size:36.0px;color:#161c26;font-weight:normal;transform:scale(0.9047,1.0000);transform-origin:0 45.58px;-webkit-text-stroke:0.25px #161c26">TCP</div>
<div class="t" style="left:1439.00px;top:478.42px;line-height:72.00px;font-size:36.0px;color:#161c26;font-weight:normal;transform:scale(0.9047,1.0000);transform-origin:0 45.58px;-webkit-text-stroke:0.25px #161c26">52085   80 [ACK] Seq=728 Ack=1310 Win=524288 Len=0</div>
<svg style="position:absolute;left:1556.27px;top:488.80px" width="22" height="48" viewBox="0 0 22 48"><path d="M0.8 23.8 H19 M11 18 L19.3 23.8 L11 29.6" stroke="#161c26" stroke-width="2.9" fill="none"/></svg>
</div>
<div style="left:360.90px;top:217.94px;width:2.00px;height:490.80px;background:#9898a0;"></div>
<div style="left:360.90px;top:217.94px;width:21.10px;height:2.00px;background:#9898a0;"></div>
<div style="left:360.90px;top:706.74px;width:21.10px;height:2.00px;background:#9898a0;"></div>
<div style="left:344.00px;top:364.58px;width:28.00px;height:2.00px;background:#9898a0;"></div>
<svg style="position:absolute;left:368px;top:358.58px" width="18" height="14" viewBox="0 0 18 14"><path d="M2 1.2 L16 7 L2 12.8 Z" fill="#9898a0"/></svg>
<div style="left:352.00px;top:462.34px;width:29.70px;height:2.00px;background:#9898a0;"></div>
<svg style="position:absolute;left:340px;top:456.34px" width="18" height="14" viewBox="0 0 18 14"><path d="M16 1.2 L1.7 7 L16 12.8 Z" fill="#9898a0"/></svg>
<svg style="position:absolute;left:355px;top:554.1px" width="14" height="14" viewBox="0 0 14 14"><path d="M7 0.5 L13 7 L7 13.5 L1 7 Z" fill="#9898a0"/></svg>
<div style="left:338.00px;top:767.70px;width:2324.00px;height:38.70px;background:#f0f0f0;"></div>
<div style="left:380.60px;top:767.70px;width:1616.50px;height:35.50px;background:#cdcdcd;"></div>
<svg style="position:absolute;left:348px;top:775px" width="21" height="23"><path d="M17.50 2.30 L10.90 2.30 L2.70 11.00 L10.90 19.70 L17.50 19.70 L9.30 11.00 Z" fill="#505050"/></svg>
<svg style="position:absolute;left:2633px;top:775px" width="20" height="23"><path d="M2.00 2.30 L8.60 2.30 L16.80 11.00 L8.60 19.70 L2.00 19.70 L10.20 11.00 Z" fill="#505050"/></svg>
<div style="left:336px;top:821px;width:2329px;height:535.7px;box-sizing:border-box;border-style:solid;border-color:#8e9298;border-width:3px 3px 3.4px 2px;background:#fff"></div>
<div style="left:387.00px;top:824.00px;width:2234.00px;height:195.92px;background:#f0f0f0;"></div>
<div style="left:386.80px;top:1018.92px;width:2234.20px;height:49.48px;background:#6c9bd3;"></div>
<div style="left:436.70px;top:1068.40px;width:2184.30px;height:48.88px;background:#7eb4f5;"></div>
<div style="left:338px;top:824px;width:2283px;height:490.4px;overflow:hidden">
<div class="t" style="left:55.50px;top:-8.88px;line-height:72.00px;font-size:36.0px;color:#161c26;font-weight:normal;transform:scale(0.9047,1.0000);transform-origin:0 45.58px;-webkit-text-stroke:0.25px #161c26">Frame 7: 848 bytes on wire (6784 bits), 426 bytes captured (3408 bits) on interface 0</div>
<div class="t" style="left:55.50px;top:40.00px;line-height:72.00px;font-size:36.0px;color:#161c26;font-weight:normal;transform:scale(0.9047,1.0000);transform-origin:0 45.58px;-webkit-text-stroke:0.25px #161c26">Null/Loopback</div>
<div class="t" style="left:55.50px;top:88.88px;line-height:72.00px;font-size:36.0px;color:#161c26;font-weight:normal;transform:scale(0.9047,1.0000);transform-origin:0 45.58px;-webkit-text-stroke:0.25px #161c26">Internet Protocol Version 4, Src: 127.0.0.1, Dst: 127.0.0.1</div>
<div class="t" style="left:55.50px;top:137.76px;line-height:72.00px;font-size:36.0px;color:#161c26;font-weight:normal;transform:scale(0.9047,1.0000);transform-origin:0 45.58px;-webkit-text-stroke:0.25px #161c26">Transmission Control Protocol, Src Port: 52085, Dst Port: 80, Seq: 1, Ack: 1, Len: 382</div>
<div class="t" style="left:55.50px;top:186.64px;line-height:72.00px;font-size:36.0px;color:#161c26;font-weight:normal;transform:scale(0.9047,1.0000);transform-origin:0 45.58px;-webkit-text-stroke:0.25px #161c26">Hypertext Transfer Protocol</div>
<div class="t" style="left:103.00px;top:235.52px;line-height:72.00px;font-size:36.0px;color:#161c26;font-weight:normal;transform:scale(0.9047,1.0000);transform-origin:0 45.58px;-webkit-text-stroke:0.25px #161c26">GET / HTTP/1.1\r\n</div>
<div class="t" style="left:103.00px;top:284.40px;line-height:72.00px;font-size:36.0px;color:#161c26;font-weight:normal;transform:scale(0.9047,1.0000);transform-origin:0 45.58px;-webkit-text-stroke:0.25px #161c26">Host: 127.0.0.1\r\n</div>
<div class="t" style="left:103.00px;top:333.28px;line-height:72.00px;font-size:36.0px;color:#161c26;font-weight:normal;transform:scale(0.9047,1.0000);transform-origin:0 45.58px;-webkit-text-stroke:0.25px #161c26">Connection: keep-alive\r\n</div>
<div class="t" style="left:103.00px;top:382.16px;line-height:72.00px;font-size:36.0px;color:#161c26;font-weight:normal;transform:scale(0.9047,1.0000);transform-origin:0 45.58px;-webkit-text-stroke:0.25px #161c26">Upgrade-Insecure-Requests: 1\r\n</div>
<div class="t" style="left:103.00px;top:431.04px;line-height:72.00px;font-size:36.0px;color:#161c26;font-weight:normal;transform:scale(0.9047,1.0000);transform-origin:0 45.58px;-webkit-text-stroke:0.25px #161c26">User-Agent: Mozilla/5.0 (Windows NT 10.0; Win64; x64) AppleWebKit/537.36 (KHTML, like Gecko) Chrome/65.0.3325.181 Safari/537.36\r\n</div>
</div>
<svg style="position:absolute;left:350.0px;top:834.0px" width="24" height="30" viewBox="0 0 24 30"><path d="M8 6.5 L17 15.4 L8 24.3" stroke="#9ba0a5" stroke-width="3.8" fill="none"/></svg>
<svg style="position:absolute;left:350.0px;top:882.88px" width="24" height="30" viewBox="0 0 24 30"><path d="M8 6.5 L17 15.4 L8 24.3" stroke="#9ba0a5" stroke-width="3.8" fill="none"/></svg>
<svg style="position:absolute;left:350.0px;top:931.76px" width="24" height="30" viewBox="0 0 24 30"><path d="M8 6.5 L17 15.4 L8 24.3" stroke="#9ba0a5" stroke-width="3.8" fill="none"/></svg>
<svg style="position:absolute;left:350.0px;top:980.64px" width="24" height="30" viewBox="0 0 24 30"><path d="M8 6.5 L17 15.4 L8 24.3" stroke="#9ba0a5" stroke-width="3.8" fill="none"/></svg>
<svg style="position:absolute;left:346.0px;top:1031.82px" width="30" height="30" viewBox="0 0 30 30"><path d="M6.8 6.6 L15.7 14.8 L24.5 6.6" stroke="#333" stroke-width="4" fill="none"/></svg>
<svg style="position:absolute;left:397.5px;top:1078.4px" width="24" height="30" viewBox="0 0 24 30"><path d="M8 6.5 L17 15.4 L8 24.3" stroke="#9ba0a5" stroke-width="3.8" fill="none"/></svg>
<div style="left:2623.00px;top:824.00px;width:39.00px;height:490.40px;background:#f0f0f0;"></div>
<div style="left:2624.00px;top:865.60px;width:35.00px;height:224.00px;background:#cdcdcd;"></div>
<svg style="position:absolute;left:2630px;top:836px" width="25" height="21"><path d="M2.80 17.80 L2.80 11.40 L11.90 2.00 L21.00 11.40 L21.00 17.80 L11.90 8.40 Z" fill="#505050"/></svg>
<svg style="position:absolute;left:2630px;top:1283px" width="25" height="21"><path d="M2.80 2.00 L2.80 8.40 L11.90 17.80 L21.00 8.40 L21.00 2.00 L11.90 11.40 Z" fill="#505050"/></svg>
<div style="left:338.00px;top:1314.40px;width:2324.00px;height:38.90px;background:#f0f0f0;"></div>
<div style="left:380.60px;top:1315.50px;width:1875.90px;height:35.00px;background:#cdcdcd;"></div>
<svg style="position:absolute;left:348px;top:1322px" width="21" height="24"><path d="M17.50 2.60 L10.90 2.60 L2.70 11.30 L10.90 20.00 L17.50 20.00 L9.30 11.30 Z" fill="#505050"/></svg>
<svg style="position:absolute;left:2592px;top:1322px" width="20" height="24"><path d="M2.00 2.60 L8.60 2.60 L16.80 11.30 L8.60 20.00 L2.00 20.00 L10.20 11.30 Z" fill="#505050"/></svg>
<div style="left:336px;top:1368.3px;width:2329px;height:227.7px;box-sizing:border-box;border-style:solid;border-color:#8e9298;border-width:3px 3px 0 2px;background:#fff"></div>
<div style="left:338.00px;top:1371.30px;width:117.70px;height:224.70px;background:#f0f0f0;"></div>
<div style="left:2623.00px;top:1371.30px;width:39.00px;height:224.70px;background:#f0f0f0;"></div>
<div style="left:2624.00px;top:1432.30px;width:35.00px;height:96.70px;background:#cdcdcd;"></div>
<svg style="position:absolute;left:2630px;top:1383px" width="25" height="22"><path d="M2.80 18.20 L2.80 11.80 L11.90 2.50 L21.00 11.80 L21.00 18.20 L11.90 8.90 Z" fill="#505050"/></svg>
<div style="left:338px;top:1371.3px;width:2285px;height:224.7px;overflow:hidden">
<div style="left:860.47px;top:0px;width:215.00px;height:44.00px;background:#0078d7"></div>
<div style="left:1388.18px;top:0px;width:78.18px;height:44.00px;background:#0078d7"></div>
<div style="left:137.30px;top:44.00px;width:938.16px;height:44.30px;background:#0078d7"></div>
<div style="left:1134.10px;top:44.00px;width:332.27px;height:44.30px;background:#0078d7"></div>
<div style="left:137.30px;top:88.00px;width:938.16px;height:44.30px;background:#0078d7"></div>
<div style="left:1134.10px;top:88.00px;width:332.27px;height:44.30px;background:#0078d7"></div>
<div style="left:137.30px;top:132.00px;width:938.16px;height:44.30px;background:#0078d7"></div>
<div style="left:1134.10px;top:132.00px;width:332.27px;height:44.30px;background:#0078d7"></div>
<div style="left:137.30px;top:176.00px;width:938.16px;height:48.70px;background:#0078d7"></div>
<div style="left:1134.10px;top:176.00px;width:332.27px;height:48.70px;background:#0078d7"></div>
<div class="t" style="left:20.03px;top:-11.28px;line-height:72.00px;font-size:36.0px;color:#4a4a4a;font-weight:normal;transform:scale(0.9047,1.0000);transform-origin:0 45.58px;-webkit-text-stroke:0.25px #4a4a4a">0020</div>
<div class="t" style="left:137.30px;top:-11.28px;line-height:72.00px;font-size:36.0px;color:#161c26;font-weight:normal;transform:scale(0.9047,1.0000);transform-origin:0 45.58px;-webkit-text-stroke:0.25px #161c26">91 2e 77 3a 50 18 08 05  55 e5 00 00</div>
<div class="t" style="left:860.47px;top:-11.28px;line-height:72.00px;font-size:36.0px;color:#fff;font-weight:normal;transform:scale(0.9047,1.0000);transform-origin:0 45.58px;-webkit-text-stroke:0.25px #fff">47 45 54 20</div>
<div class="t" style="left:1134.10px;top:-11.28px;line-height:72.00px;font-size:36.0px;color:#a8a8a8;font-weight:normal;transform:scale(0.9047,1.0000);transform-origin:0 45.58px;-webkit-text-stroke:0px #a8a8a8">·</div>
<div class="t" style="left:1153.64px;top:-11.28px;line-height:72.00px;font-size:36.0px;color:#161c26;font-weight:normal;transform:scale(0.9047,1.0000);transform-origin:0 45.58px;-webkit-text-stroke:0.25px #161c26">.</div>
<div class="t" style="left:1173.18px;top:-11.28px;line-height:72.00px;font-size:36.0px;color:#161c26;font-weight:normal;transform:scale(0.9047,1.0000);transform-origin:0 45.58px;-webkit-text-stroke:0.25px #161c26">w</div>
<div class="t" style="left:1192.73px;top:-11.28px;line-height:72.00px;font-size:36.0px;color:#161c26;font-weight:normal;transform:scale(0.9047,1.0000);transform-origin:0 45.58px;-webkit-text-stroke:0.25px #161c26">:</div>
<div class="t" style="left:1212.28px;top:-11.28px;line-height:72.00px;font-size:36.0px;color:#161c26;font-weight:normal;transform:scale(0.9047,1.0000);transform-origin:0 45.58px;-webkit-text-stroke:0.25px #161c26">P</div>
<div class="t" style="left:1231.82px;top:-11.28px;line-height:72.00px;font-size:36.0px;color:#a8a8a8;font-weight:normal;transform:scale(0.9047,1.0000);transform-origin:0 45.58px;-webkit-text-stroke:0px #a8a8a8">·</div>
<div class="t" style="left:1251.37px;top:-11.28px;line-height:72.00px;font-size:36.0px;color:#a8a8a8;font-weight:normal;transform:scale(0.9047,1.0000);transform-origin:0 45.58px;-webkit-text-stroke:0px #a8a8a8">·</div>
<div class="t" style="left:1270.91px;top:-11.28px;line-height:72.00px;font-size:36.0px;color:#a8a8a8;font-weight:normal;transform:scale(0.9047,1.0000);transform-origin:0 45.58px;-webkit-text-stroke:0px #a8a8a8">·</div>
<div class="t" style="left:1310.00px;top:-11.28px;line-height:72.00px;font-size:36.0px;color:#161c26;font-weight:normal;transform:scale(0.9047,1.0000);transform-origin:0 45.58px;-webkit-text-stroke:0.25px #161c26">U</div>
<div class="t" style="left:1329.55px;top:-11.28px;line-height:72.00px;font-size:36.0px;color:#a8a8a8;font-weight:normal;transform:scale(0.9047,1.0000);transform-origin:0 45.58px;-webkit-text-stroke:0px #a8a8a8">·</div>
<div class="t" style="left:1349.09px;top:-11.28px;line-height:72.00px;font-size:36.0px;color:#a8a8a8;font-weight:normal;transform:scale(0.9047,1.0000);transform-origin:0 45.58px;-webkit-text-stroke:0px #a8a8a8">·</div>
<div class="t" style="left:1368.63px;top:-11.28px;line-height:72.00px;font-size:36.0px;color:#a8a8a8;font-weight:normal;transform:scale(0.9047,1.0000);transform-origin:0 45.58px;-webkit-text-stroke:0px #a8a8a8">·</div>
<div class="t" style="left:1388.18px;top:-11.28px;line-height:72.00px;font-size:36.0px;color:#fff;font-weight:normal;transform:scale(0.9047,1.0000);transform-origin:0 45.58px;-webkit-text-stroke:0.25px #fff">GET </div>
<div class="t" style="left:20.03px;top:32.72px;line-height:72.00px;font-size:36.0px;color:#4a4a4a;font-weight:normal;transform:scale(0.9047,1.0000);transform-origin:0 45.58px;-webkit-text-stroke:0.25px #4a4a4a">0030</div>
<div class="t" style="left:137.30px;top:32.72px;line-height:72.00px;font-size:36.0px;color:#fff;font-weight:normal;transform:scale(0.9047,1.0000);transform-origin:0 45.58px;-webkit-text-stroke:0.25px #fff">2f 20 48 54 54 50 2f 31  2e 31 0d 0a 48 6f 73 74</div>
<div class="t" style="left:1134.10px;top:32.72px;line-height:72.00px;font-size:36.0px;color:#fff;font-weight:normal;transform:scale(0.9047,1.0000);transform-origin:0 45.58px;-webkit-text-stroke:0.25px #fff">/ HTTP/1 .1··Host</div>
<div class="t" style="left:20.03px;top:76.72px;line-height:72.00px;font-size:36.0px;color:#4a4a4a;font-weight:normal;transform:scale(0.9047,1.0000);transform-origin:0 45.58px;-webkit-text-stroke:0.25px #4a4a4a">0040</div>
<div class="t" style="left:137.30px;top:76.72px;line-height:72.00px;font-size:36.0px;color:#fff;font-weight:normal;transform:scale(0.9047,1.0000);transform-origin:0 45.58px;-webkit-text-stroke:0.25px #fff">3a 20 31 32 37 2e 30 2e  30 2e 31 0d 0a 43 6f 6e</div>
<div class="t" style="left:1134.10px;top:76.72px;line-height:72.00px;font-size:36.0px;color:#fff;font-weight:normal;transform:scale(0.9047,1.0000);transform-origin:0 45.58px;-webkit-text-stroke:0.25px #fff">: 127.0. 0.1··Con</div>
<div class="t" style="left:20.03px;top:120.72px;line-height:72.00px;font-size:36.0px;color:#4a4a4a;font-weight:normal;transform:scale(0.9047,1.0000);transform-origin:0 45.58px;-webkit-text-stroke:0.25px #4a4a4a">0050</div>
<div class="t" style="left:137.30px;top:120.72px;line-height:72.00px;font-size:36.0px;color:#fff;font-weight:normal;transform:scale(0.9047,1.0000);transform-origin:0 45.58px;-webkit-text-stroke:0.25px #fff">6e 65 63 74 69 6f 6e 3a  20 6b 65 65 70 2d 61 6c</div>
<div class="t" style="left:1134.10px;top:120.72px;line-height:72.00px;font-size:36.0px;color:#fff;font-weight:normal;transform:scale(0.9047,1.0000);transform-origin:0 45.58px;-webkit-text-stroke:0.25px #fff">nection:  keep-al</div>
<div class="t" style="left:20.03px;top:164.72px;line-height:72.00px;font-size:36.0px;color:#4a4a4a;font-weight:normal;transform:scale(0.9047,1.0000);transform-origin:0 45.58px;-webkit-text-stroke:0.25px #4a4a4a">0060</div>
<div class="t" style="left:137.30px;top:164.72px;line-height:72.00px;font-size:36.0px;color:#fff;font-weight:normal;transform:scale(0.9047,1.0000);transform-origin:0 45.58px;-webkit-text-stroke:0.25px #fff">69 76 65 0d 0a 55 70 67  72 61 64 65 2d 49 6e 73</div>
<div class="t" style="left:1134.10px;top:164.72px;line-height:72.00px;font-size:36.0px;color:#fff;font-weight:normal;transform:scale(0.9047,1.0000);transform-origin:0 45.58px;-webkit-text-stroke:0.25px #fff">ive··Upg rade-Ins</div>
</div>
</body></html>
